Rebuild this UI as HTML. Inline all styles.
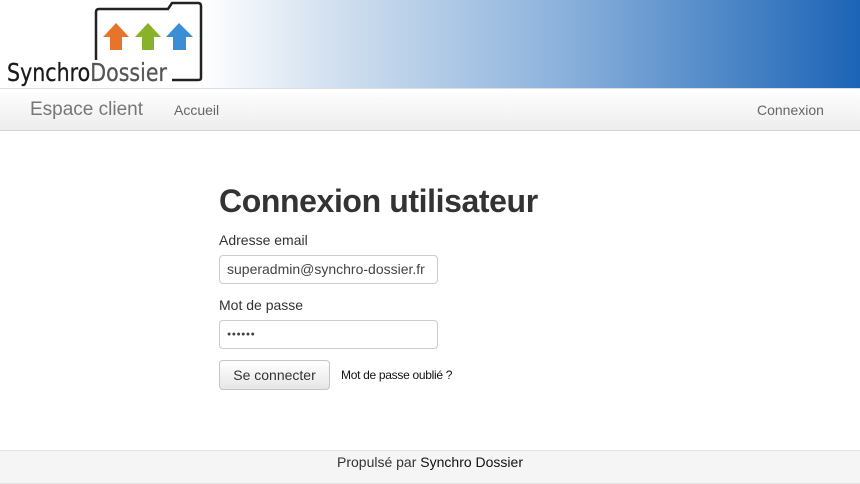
<!DOCTYPE html>
<html><head><meta charset="utf-8"><style>
body{margin:0;width:860px;height:484px;overflow:hidden;font-family:"Liberation Sans",sans-serif;background:#fff;color:#333}
.hdr{position:absolute;left:0;top:0;width:860px;height:88px;background:linear-gradient(90deg,#fff 0,#fff 200px,#d6e3f1 320px,#8cb2dc 560px,#1c64b6 860px)}
.nav{position:absolute;left:0;top:88px;width:860px;height:41px;background:linear-gradient(#fff,#ededed);border-top:1px solid #ddd;border-bottom:1px solid #d4d4d4}
.nav span{position:absolute;color:#666}
h1{position:absolute;left:219px;top:183px;margin:0;font-size:32px;letter-spacing:-0.4px;font-weight:bold;color:#333}
.lbl{position:absolute;left:219px;font-size:14px;color:#333}
.inp{position:absolute;left:219px;width:219px;height:29px;border:1px solid #ccc;border-radius:4px;box-sizing:border-box;font-size:14px;padding:5px 0 0 7px;color:#444}
.btn{position:absolute;left:219px;top:360px;width:111px;height:30px;box-sizing:border-box;border:1px solid #c5c5c5;border-radius:4px;background:linear-gradient(#fff,#e6e6e6);font-size:14px;text-align:center;line-height:29px;color:#333}
.foot{position:absolute;left:0;top:450px;width:860px;height:32px;background:#f5f5f5;border-top:1px solid #e3e3e3;border-bottom:1px solid #e3e3e3;text-align:center;font-size:14px;line-height:22px}
</style></head><body>
<div class="hdr">
<svg width="230" height="88" style="position:absolute;left:0;top:0">
<path d="M96 60 V12 Q96 9 99 9 H168 L172 3 H198 Q201 3 201 6 V78 Q201 80 198 80 H172" fill="none" stroke="#222" stroke-width="2.5"/>
<polygon points="103,37 116,23 129,37 122,37 122,50 110,50 110,37" fill="#e8732a"/>
<polygon points="135,37 148,23 161,37 154,37 154,50 142,50 142,37" fill="#88b22a"/>
<polygon points="166,37 179,23 193,37 186,37 186,50 173,50 173,37" fill="#3a8ed6"/>
<text x="7" y="81" font-family="DejaVu Sans,sans-serif" font-size="25" fill="#1a1a1a" stroke="#1a1a1a" stroke-width="0.3" textLength="160" lengthAdjust="spacingAndGlyphs">Synchro<tspan fill="#555" stroke="#555">Dossier</tspan></text>
</svg>
</div>
<div class="nav">
<span style="left:30px;top:10px;font-size:19px;color:#777">Espace client</span>
<span style="left:174px;top:13px;font-size:14px">Accueil</span>
<span style="left:757px;top:13px;font-size:14px">Connexion</span>
</div>
<h1>Connexion utilisateur</h1>
<div class="lbl" style="top:232px">Adresse email</div>
<div class="inp" style="top:255px">superadmin@synchro-dossier.fr</div>
<div class="lbl" style="top:297px">Mot de passe</div>
<div class="inp" style="top:320px;font-size:7px;padding-top:10px;letter-spacing:0.5px">●●●●●●</div>
<div class="btn">Se connecter</div>
<div style="position:absolute;left:341px;top:368px;font-size:12px;color:#111;letter-spacing:-0.3px">Mot de passe oublié ?</div>
<div class="foot">Propulsé par <span style="color:#111">Synchro Dossier</span></div>
</body></html>
